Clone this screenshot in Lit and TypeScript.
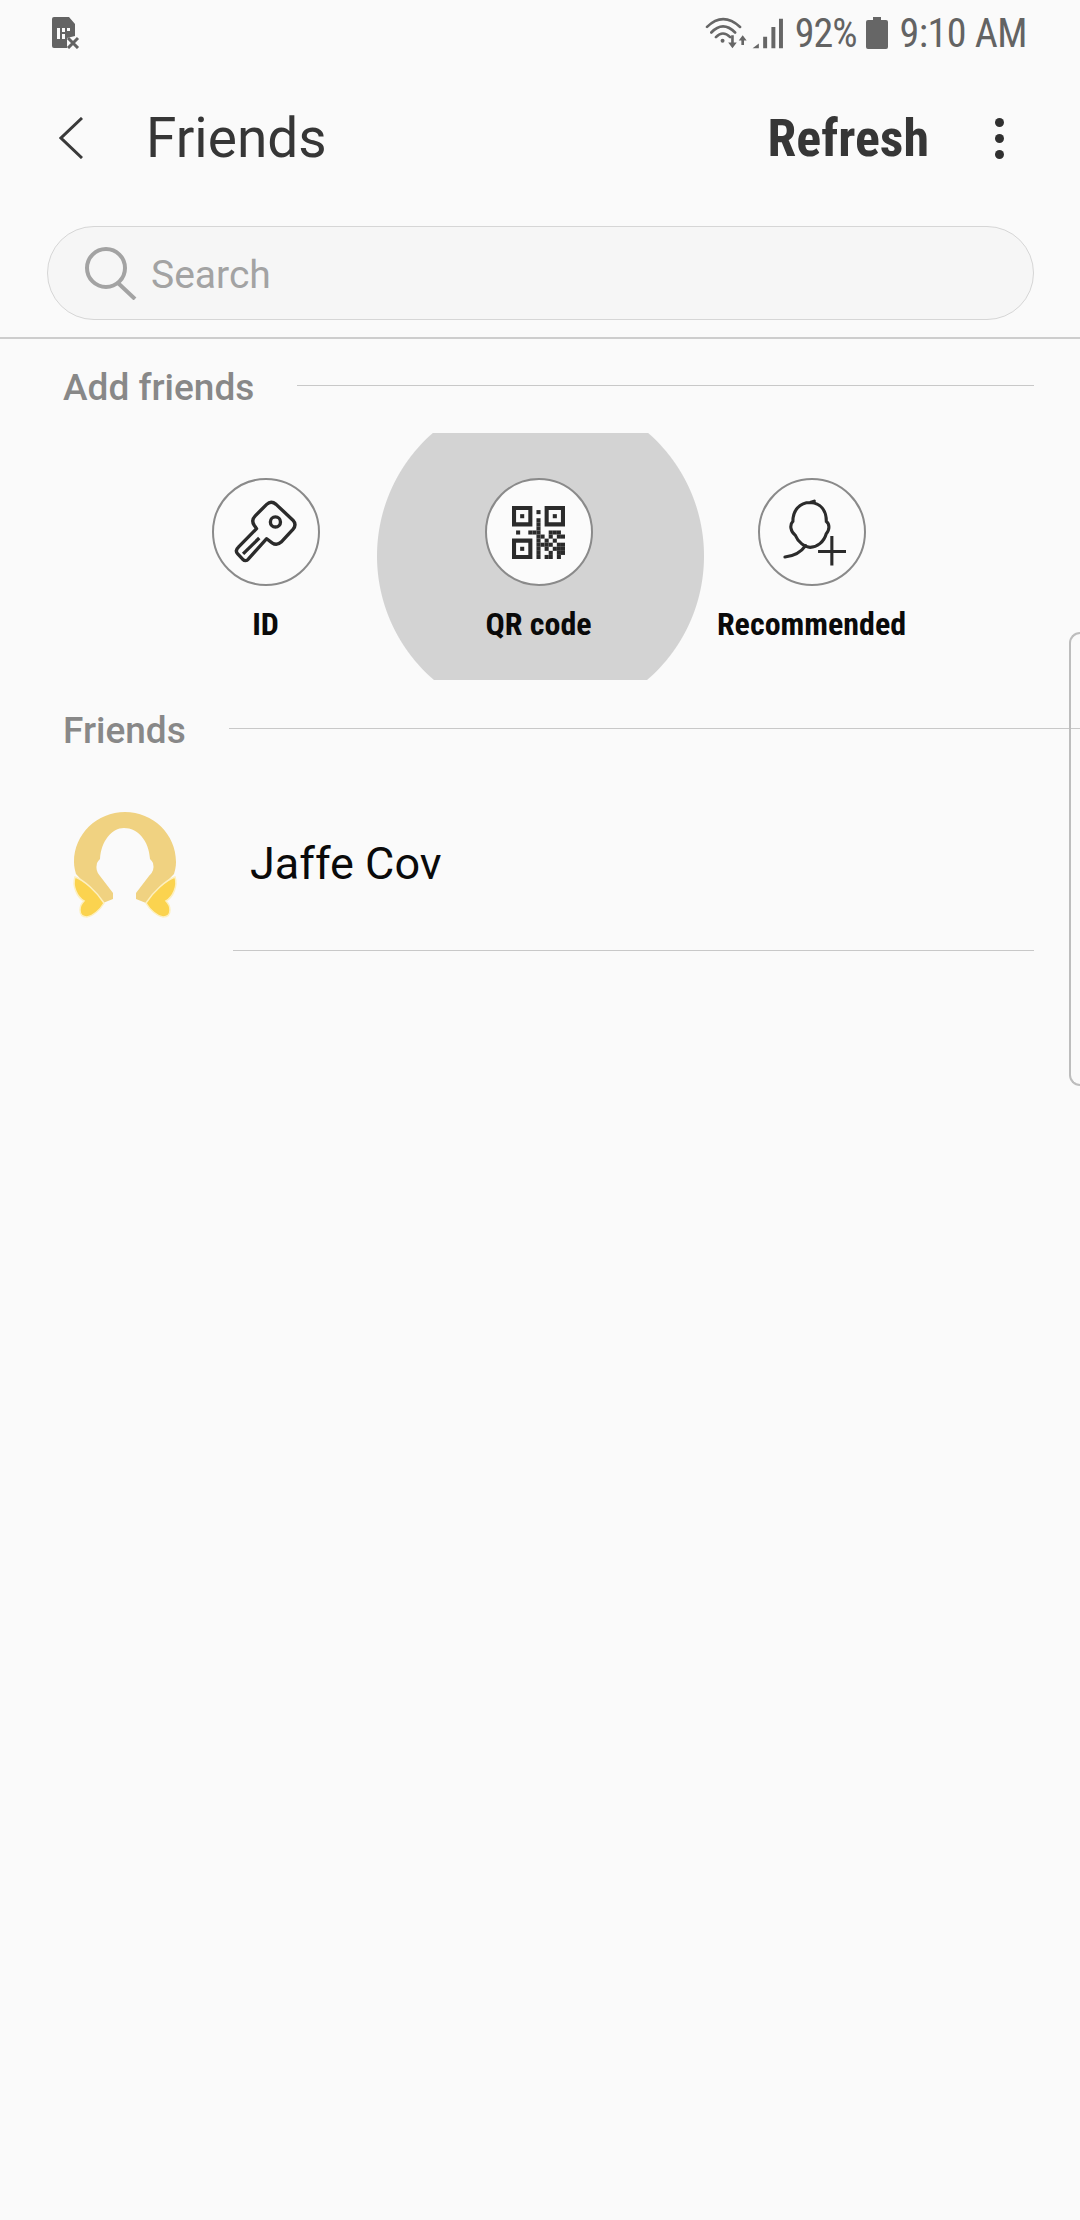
import { LitElement, html, css, svg } from "lit";
import { customElement } from "lit/decorators.js";

// qr modules outside the three finder squares, 13x13 grid
const QR_ROWS = [
  ".............",
  "......#......",
  ".............",
  "......#......",
  "......#......",
  "......#......",
  ".#..###..###.",
  "......##.#.##",
  "......#.#.#..",
  "......####.##",
  "......#.#.###",
  "......#..#.##",
  "......#.##.#.",
];

const qrIcon = () => svg`
  <svg class="qr" viewBox="0 0 52 52" fill="#2b2b2b">
    ${[[0, 0], [32, 0], [0, 32]].map(
      ([x, y]) => svg`
        <path fill-rule="evenodd" d="M${x} ${y}h20v20h-20zM${x + 4} ${y + 4}v12h12v-12z"/>
        <rect x=${x + 8} y=${y + 8} width="4" height="4"/>`
    )}
    ${QR_ROWS.map((row, r) =>
      [...row].map((c, col) =>
        c === "#" ? svg`<rect x=${col * 4} y=${r * 4} width="4" height="4"/>` : null
      )
    )}
  </svg>`;

const keyIcon = () => svg`
  <svg class="glyph" viewBox="165 245 190 190" fill="none" stroke="#2b2b2b" stroke-width="10" stroke-linejoin="round">
    <path d="M262 258Q275 246 290 258L340 305Q352 318 340 332L305 370Q292 382 278 372L262 360L208 420Q200 430 190 420L176 405Q167 395 178 385L232 330L225 320Q215 305 228 292Z"/>
    <circle cx="288" cy="310" r="15"/>
    <path d="M240 358L192 405"/>
  </svg>`;

const personIcon = () => svg`
  <svg class="glyph person" viewBox="689 237 200 200" fill="none" stroke="#2b2b2b" stroke-width="9" stroke-linecap="round">
    <path d="M797 246L785 250C755 250 735 272 735 305C725 315 728 335 742 345C750 365 770 380 785 380C805 380 825 365 832 340C842 330 842 312 832 305C832 272 815 252 785 250"/>
    <path d="M712 408C740 405 758 395 772 375"/>
    <path d="M808 392H893M848 347V433" stroke-linecap="butt"/>
  </svg>`;

@customElement("app-root")
export class AppRoot extends LitElement {
  static styles = css`
    :host {
      display: block;
      font-family: Roboto, "Noto Sans", sans-serif;
    }
    .page {
      position: relative;
      width: 1080px;
      height: 2220px;
      overflow: hidden;
      background: #fafafa;
    }
    .status {
      height: 66px;
      display: flex;
      align-items: center;
      padding: 0 53px 0 52px;
      color: #636363;
      font-size: 40px;
    }
    .status .sim { width: 28px; height: 32px; }
    .status .right {
      margin-left: auto;
      display: flex;
      align-items: center;
    }
    .status .wifi { width: 80px; height: 33px; margin-right: 10px; }
    .status .pct { font-stretch: condensed; letter-spacing: -1px; margin-right: 10px; }
    .status .time { font-stretch: condensed; letter-spacing: -0.5px; }
    .status .batt { width: 22px; height: 32px; margin-right: 11px; }
    .toolbar {
      height: 144px;
      display: flex;
      align-items: center;
      padding: 0 76px 0 59px;
      box-sizing: border-box;
    }
    .toolbar .back { width: 24px; height: 42px; margin-right: 63px; }
    .toolbar .title { font-size: 55px; color: #363636; }
    .toolbar .refresh {
      margin-left: auto;
      font-size: 52px;
      font-weight: 700;
      color: #363636;
      font-stretch: condensed;
      margin-right: 66px;
    }
    .toolbar .dots { display: flex; flex-direction: column; gap: 7px; }
    .toolbar .dots i {
      width: 9px;
      height: 9px;
      border-radius: 50%;
      background: #303030;
    }
    .search {
      height: 94px;
      margin: 16px 46px 0 47px;
      border: 1px solid #d6d6d6;
      border-radius: 47px;
      box-sizing: border-box;
      background: #f6f6f6;
      display: flex;
      align-items: center;
      padding-left: 35px;
      gap: 14px;
      color: #a3a3a3;
      font-size: 39px;
    }
    .search svg { width: 54px; height: 54px; }
    .search span { padding-top: 4px; }
    .rule { height: 2px; background: #cdcdcd; margin-top: 17px; }
    .section {
      display: flex;
      align-items: center;
      height: 68px;
      padding-left: 63px;
      font-size: 37px;
      font-weight: 500;
      color: #888;
    }
    .section i { flex: 1; height: 1px; background: #c8c8c8; margin-bottom: 3px; }
    .section.add { margin-top: 14px; }
    .section.add i { margin-left: 43px; margin-right: 46px; }
    .section.friends { height: 66px; margin-top: 17px; }
    .section.friends i { margin-left: 43px; }
    .actions {
      display: flex;
      justify-content: center;
      height: 247px;
      margin-top: 12px;
      padding-right: 3px;
    }
    .action {
      position: relative;
      width: 273px;
      display: flex;
      flex-direction: column;
      align-items: center;
      padding-top: 45px;
      box-sizing: border-box;
      font-size: 32px;
      font-weight: 700;
      font-stretch: condensed;
      color: #0a0a0a;
    }
    .action.pressed::before {
      content: "";
      position: absolute;
      left: -25px;
      right: -29px;
      top: 0;
      bottom: 0;
      background: radial-gradient(circle 164px at 163.500px 123px, #d3d3d3 163px, transparent 164px);
    }
    .circle {
      position: relative;
      width: 108px;
      height: 108px;
      border-radius: 50%;
      border: 2px solid #8a8a8a;
      box-sizing: border-box;
      background: #fbfbfb;
      display: flex;
      align-items: center;
      justify-content: center;
      margin-bottom: 19px;
    }
    .action span { position: relative; }
    .glyph { width: 64px; height: 64px; flex: none; }
    .glyph.person { width: 69px; height: 69px; }
    .qr { width: 53px; height: 53px; flex: none; }
    .row {
      display: flex;
      align-items: center;
      height: 187px;
      box-sizing: border-box;
      padding-top: 13px;
      padding-left: 70px;
      font-size: 45px;
      color: #0a0a0a;
    }
    .row svg { width: 110px; height: 115px; margin-right: 70px; }
    .row-line { height: 1px; background: #c8c8c8; margin: 0 46px 0 233px; }
    .handle {
      position: absolute;
      right: 0;
      top: 632px;
      width: 11px;
      height: 454px;
      box-sizing: border-box;
      border: 2px solid #bdbdbd;
      border-right: none;
      border-radius: 14px 0 0 14px;
    }
  `;

  render() {
    return html`
      <div class="page">
        <div class="status">
          <svg class="sim" viewBox="0 0 28 32" fill="#636363">
            <path fill-rule="evenodd" d="M2 0h15l6 7v12l-8 2v10H2q-2 0-2-2V2q0-2 2-2zM5 11v11h3V11zm5 0v4h3v-4zm5 0v3h3v-3zM10 17v5h3v-5z"/>
            <path d="M16 21l10 10M26 21l-10 10" stroke="#636363" stroke-width="3" fill="none"/>
          </svg>
          <div class="right">
            <svg class="wifi" viewBox="190 45 240 100">
              <g fill="none" stroke="#666" stroke-width="8" stroke-linecap="round">
                <path d="M195 75Q243 28 295 75M208 92Q243 55 280 92M222 106Q243 84 265 106"/>
              </g>
              <g fill="#666">
                <circle cx="242" cy="117" r="6"/>
                <path d="M268 100h8v22h9l-13 18l-13-18h9zM299 130h8v-14h8l-12-16l-12 16h8z"/>
                <path d="M333 140L352 125V140zM365 105h12v35h-12zM390 75h12v65h-12zM413 50h12v90h-12z"/>
              </g>
            </svg>
            <span class="pct">92%</span>
            <svg class="batt" viewBox="0 0 22 32" fill="#666">
              <path d="M7 0h8v3h5q2 0 2 2v25q0 2-2 2H2q-2 0-2-2V5q0-2 2-2h5z"/>
            </svg>
            <span class="time">9:10 AM</span>
          </div>
        </div>

        <div class="toolbar">
          <svg class="back" viewBox="0 0 24 42" fill="none" stroke="#3a3a3a" stroke-width="3">
            <path d="M23 1L2 21l21 20"/>
          </svg>
          <span class="title">Friends</span>
          <span class="refresh">Refresh</span>
          <span class="dots"><i></i><i></i><i></i></span>
        </div>

        <div class="search">
          <svg viewBox="0 0 54 54" fill="none" stroke="#a3a3a3" stroke-width="4">
            <circle cx="23" cy="22" r="19"/>
            <path d="M35 37l17 16"/>
          </svg>
          <span>Search</span>
        </div>
        <div class="rule"></div>

        <div class="section add"><span>Add friends</span><i></i></div>

        <div class="actions">
          <div class="action"><div class="circle">${keyIcon()}</div><span>ID</span></div>
          <div class="action pressed"><div class="circle">${qrIcon()}</div><span>QR code</span></div>
          <div class="action"><div class="circle">${personIcon()}</div><span>Recommended</span></div>
        </div>

        <div class="section friends"><span>Friends</span><i></i></div>

        <div class="row">
          <svg viewBox="70 805 110 115">
            <path fill="#f0d281" d="M125 811C97 811 74 833 74 861C74 866 75 869 76 873L103 902L113 898L113 892L100 875Q95 870 97 862Q98 860 100 858C101 840 112 827 124 827C138 827 149 840 150 858Q152 860 153 862Q155 870 149 875L136 892L136 898L146 902L174 873C175 869 176 866 176 861C176 833 153 811 125 811Z"/>
            <g fill="#fbd34f" stroke="#fdf0c0" stroke-width="1.500">
              <path d="M75 876C84 879 97 891 104 902C100 909 93 915 87 916C83 916 80 914 80 909C80 905 82 902 84 900C77 896 72 885 75 876Z"/>
              <path d="M175 876C166 879 153 891 146 902C150 909 157 915 163 916C167 916 170 914 170 909C170 905 168 902 166 900C173 896 178 885 175 876Z"/>
            </g>
          </svg>
          <span>Jaffe Cov</span>
        </div>
        <div class="row-line"></div>

        <div class="handle"></div>
      </div>
    `;
  }
}
